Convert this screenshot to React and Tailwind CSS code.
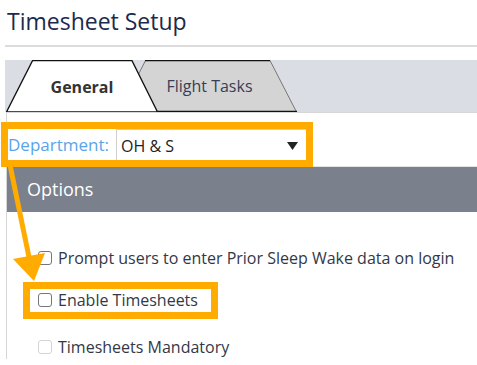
import React from "react";

function Checkbox({ label, disabled }) {
  return (
    <div className="flex items-center h-[24px]">
      <span
        className={`w-[14px] h-[14px] rounded-[3px] border bg-white ${
          disabled ? "border-[#d4d4d4] bg-[#f4f4f4]" : "border-[#767676]"
        }`}
      />
      <span className="ml-[6px] text-[16px] text-[#333847] whitespace-nowrap">
        {label}
      </span>
    </div>
  );
}

export default function App() {
  return (
    <div className="relative w-[477px] h-[365px] overflow-hidden bg-white font-['Open_Sans',sans-serif]">
      <div className="ml-[5px]">
        {/* Title */}
        <h1 className="h-[47px] pt-[4px] pl-[2px] border-b-2 border-[#dcdcdc] text-[23px] leading-[35px] text-[#1c2a4c]">
          Timesheet Setup
        </h1>

        {/* Tabs */}
        <div className="mt-[13px] h-[52px] bg-[#dadde3] flex pl-[1px]">
          <div className="relative z-10 w-[152px] h-[52px] flex items-center justify-center">
            <svg className="absolute inset-0" width="152" height="52" viewBox="0 0 152 52">
              <polygon points="0.5,52 26.5,0.7 126,0.7 151.5,52" fill="#ffffff" stroke="#111" strokeWidth="1.3" />
            </svg>
            <span className="relative text-[16px] font-bold text-[#333] pt-[1px]">General</span>
          </div>
          <div className="relative -ml-[39px] w-[178px] h-[52px] flex items-center justify-center">
            <svg className="absolute inset-0" width="178" height="52" viewBox="0 0 178 52">
              <polygon points="0,52 26,0 151,0 178,52" fill="#d4d4d4" />
              <line x1="0.5" y1="51.5" x2="26.5" y2="0.5" stroke="#777" strokeWidth="1" />
              <line x1="151" y1="0.5" x2="177.5" y2="52" stroke="#777" strokeWidth="1" />
              <line x1="26" y1="0.6" x2="151" y2="0.6" stroke="#111" strokeWidth="1.2" />
              <line x1="0" y1="51.4" x2="178" y2="51.4" stroke="#111" strokeWidth="1.2" />
            </svg>
            <span className="relative text-[16px] text-[#3a3d55] ml-[3px]">Flight Tasks</span>
          </div>
        </div>

        {/* Panel */}
        <div className="ml-[1px] border-l border-t border-[#d6d6d6]">
          <div className="h-[54px] flex items-start pt-[16px] border-b border-[#e2e2e2]">
            <span className="w-[109px] pl-[1px] mt-[3px] text-[17px] text-[#5aa4ea] whitespace-nowrap">
              Department:
            </span>
            <div className="w-[192px] h-[33px] border border-[#cfcfcf] bg-white flex items-center justify-between pl-[4px] pr-[9px]">
              <span className="text-[16px] text-[#222] pt-[1px]">OH &amp; S</span>
              <svg width="11" height="8" viewBox="0 0 11 8">
                <polygon points="0,0 11,0 5.5,8" fill="#222" />
              </svg>
            </div>
          </div>

          <div className="h-[45px] bg-[#7a808c] flex items-center pl-[20px]">
            <span className="text-[18px] text-white">Options</span>
          </div>

          <div className="pl-[31px] pt-[34px]">
            <Checkbox label="Prompt users to enter Prior Sleep Wake data on login" />
            <div className="mt-[18px]">
              <Checkbox label="Enable Timesheets" />
            </div>
            <div className="mt-[23px]">
              <Checkbox label="Timesheets Mandatory" disabled />
            </div>
          </div>
        </div>
      </div>

      {/* Annotation highlights */}
      <div className="absolute left-[1px] top-[122px] w-[312px] h-[45px] border-[7px] border-[#ffab00]" />
      <div className="absolute left-[23px] top-[282px] w-[195px] h-[37px] border-[7px] border-[#ffab00]" />
      <svg className="absolute left-0 top-0" width="477" height="365" viewBox="0 0 477 365">
        <line x1="10" y1="165" x2="30" y2="262" stroke="#ffab00" strokeWidth="5" />
        <polygon points="13,259 45,253 34,281" fill="#ffab00" />
      </svg>
    </div>
  );
}
